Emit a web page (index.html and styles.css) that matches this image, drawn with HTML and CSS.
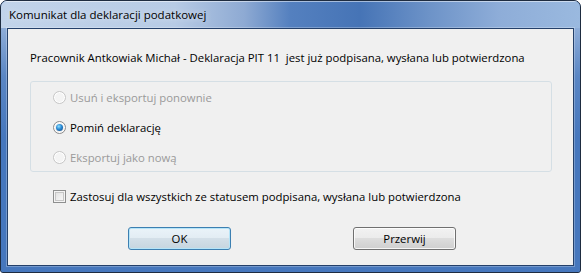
FILE: index.html
```html
<!DOCTYPE html>
<html lang="pl">
<head>
    <meta charset="UTF-8">
    <title>Komunikat dla deklaracji podatkowej</title>
    <link rel="stylesheet" href="styles.css">
</head>
<body>
    <div class="window">
        <div class="titlebar">
            <span class="title">Komunikat dla deklaracji podatkowej</span>
        </div>

        <div class="frame">
            <div class="client">
                <p class="message">Pracownik Antkowiak Michał - Deklaracja PIT 11&nbsp; jest już podpisana, wysłana lub potwierdzona</p>

                <!-- Options -->
                <div class="group">
                    <div class="option disabled">
                        <span class="radio"></span>
                        <span>Usuń i eksportuj ponownie</span>
                    </div>
                    <div class="option">
                        <span class="radio checked"></span>
                        <span>Pomiń deklarację</span>
                    </div>
                    <div class="option disabled">
                        <span class="radio"></span>
                        <span>Eksportuj jako nową</span>
                    </div>
                </div>

                <div class="option apply-all">
                    <span class="checkbox"></span>
                    <span>Zastosuj dla wszystkich ze statusem podpisana, wysłana lub potwierdzona</span>
                </div>

                <div class="button-row">
                    <button class="btn default">OK</button>
                    <button class="btn">Przerwij</button>
                </div>
            </div>
        </div>
    </div>
</body>
</html>
```

FILE: styles.css
```css
body {
    margin: 0;
    padding: 0;
    background-color: #fff;
    font-family: "Open Sans", "Noto Sans", sans-serif;
    font-size: 11.35px;
    color: #000;
}

/* Window frame */
.window {
    width: 581px;
    height: 273px;
    box-sizing: border-box;
    border: 1px solid #1e2c40;
    border-radius: 7px 7px 3px 3px;
    overflow: hidden;
    display: flex;
    flex-direction: column;
    background-color: #4677bd;
}
.titlebar {
    height: 27px;
    flex-shrink: 0;
    display: flex;
    align-items: center;
    padding-left: 8px;
    background: linear-gradient(to right, #c2d4ea 0%, #b7cbe5 30%, #8eaad3 42%, #5480bf 50%, #4674b6 62%, #6d93c8 74%, #8eadd8 86%, #9ab9df 100%);
    box-shadow: inset 0 1px 0 rgba(255, 255, 255, 0.5);
}
.title {
    font-size: 11.5px;
    color: #000;
    text-shadow: 0 0 6px rgba(255, 255, 255, 0.7);
}
.frame {
    flex-grow: 1;
    display: flex;
    padding: 0 6px 6px 6px;
    background: linear-gradient(to bottom, #8eadd8 0%, #5a86c4 20%, #4677bd 45%, #4677bd 100%);
}
.client {
    flex-grow: 1;
    display: flex;
    flex-direction: column;
    border: 1px solid #24406a;
    box-shadow: 0 0 0 1px rgba(255, 255, 255, 0.25);
    background-color: #f0f0f0;
}

/* Message */
.message {
    margin: 21px 0 0 22px;
    line-height: 16px;
    white-space: nowrap;
}

/* Group box */
.group {
    margin: 15px 21px 0 22px;
    padding: 6px 0 5px 22px;
    border: 1px solid #d5dfe5;
    border-radius: 3px;
    display: flex;
    flex-direction: column;
    gap: 12px;
}
.option {
    height: 18px;
    display: flex;
    align-items: center;
    gap: 4px;
    white-space: nowrap;
}
.option.disabled {
    color: #9a9a9a;
}
.radio {
    width: 11px;
    height: 11px;
    border: 1px solid #8c8c8c;
    border-radius: 50%;
    background: radial-gradient(circle at 50% 40%, #ffffff 0%, #f0f0f0 50%, #d4d4d4 100%);
    box-shadow: inset 0 0 0 1px #fff;
    position: relative;
    flex-shrink: 0;
}
.disabled .radio {
    border-color: #c6c6c6;
    background: #f4f4f4;
}
.radio.checked::after {
    content: "";
    position: absolute;
    left: 2px;
    top: 2px;
    width: 7px;
    height: 7px;
    border-radius: 50%;
    background: radial-gradient(circle at 40% 35%, #8ee0ff 0%, #2a8ad4 45%, #0e3f78 100%);
}

/* Apply to all */
.apply-all {
    margin: 15px 0 0 45px;
}
.checkbox {
    width: 11px;
    height: 11px;
    border: 1px solid #8e8f8f;
    background: linear-gradient(135deg, #dcdcdc 0%, #f0f0f0 60%, #fbfbfb 100%);
    box-shadow: inset 0 0 0 1px #f4f4f4, inset 0 0 0 2px #c6c6c6;
    flex-shrink: 0;
}

/* Buttons */
.button-row {
    display: flex;
    gap: 122px;
    margin: 22px 0 0 120px;
}
.btn {
    width: 103px;
    height: 23px;
    padding: 0;
    font-family: inherit;
    font-size: 11.35px;
    color: #000;
    border: 1px solid #707070;
    border-radius: 3px;
    background: linear-gradient(to bottom, #f2f2f2 0%, #ebebeb 49%, #dddddd 50%, #cfcfcf 100%);
    box-shadow: inset 0 0 0 1px rgba(255, 255, 255, 0.8);
}
.btn.default {
    border-color: #3c7fb1;
    background: linear-gradient(to bottom, #eaf3f9 0%, #e2ecf3 49%, #d3dfe8 50%, #c6d5df 100%);
    box-shadow: inset 0 0 0 1px #b5e4f8;
}
```
